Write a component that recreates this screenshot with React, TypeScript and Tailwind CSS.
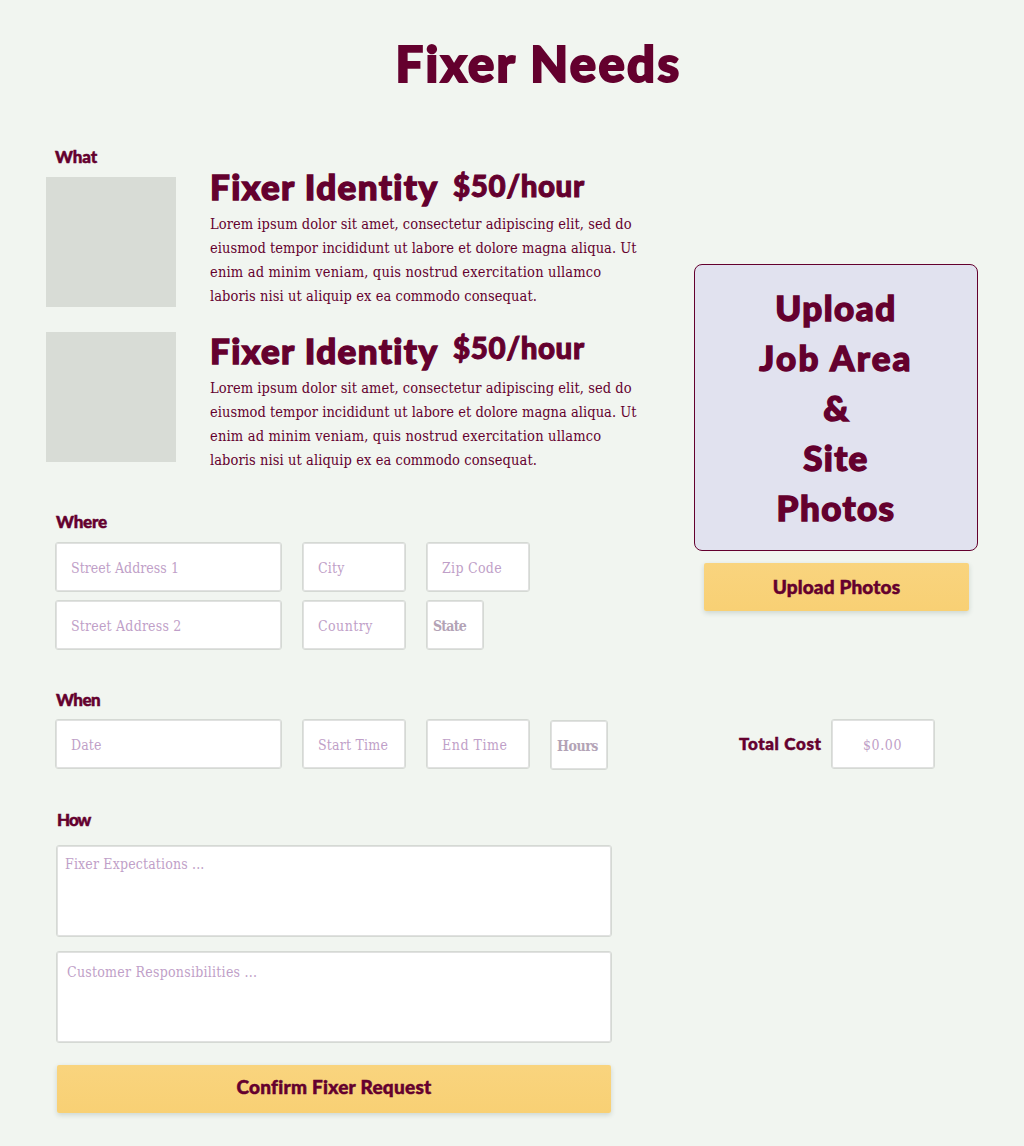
import type { ReactNode } from "react";

const LOREM = [
  { text: "Lorem ipsum dolor sit amet, consectetur adipiscing elit, sed do", track: "tracking-[0.055px]" },
  { text: "eiusmod tempor incididunt ut labore et dolore magna aliqua. Ut", track: "tracking-[0.04px]" },
  { text: "enim ad minim veniam, quis nostrud exercitation ullamco", track: "tracking-[0.185px]" },
  { text: "laboris nisi ut aliquip ex ea commodo consequat.", track: "tracking-[0.08px]" },
];

const UPLOAD = [
  { text: "Upload", track: "tracking-[1.5px]" },
  { text: "Job Area", track: "tracking-[2.2px]" },
  { text: "&", track: "tracking-normal" },
  { text: "Site", track: "tracking-[1.3px]" },
  { text: "Photos", track: "tracking-[1.4px]" },
];

function Label({ children, className }: { children: ReactNode; className: string }) {
  return (
    <h2
      className={
        "h-5 whitespace-nowrap font-['Lato',sans-serif] text-[17px] leading-5 font-black [-webkit-text-stroke:0.5px_#64002e] " +
        className
      }
    >
      {children}
    </h2>
  );
}

function Field({ children, className }: { children: ReactNode; className: string }) {
  return (
    <div
      className={
        "flex h-[50px] shrink-0 items-center rounded-[3px] border border-[#d5d9d4] bg-white pt-[3px] text-[14px] whitespace-nowrap text-[#bf9fc8] inset-ring inset-ring-[#e0e1e0] " +
        className
      }
    >
      {children}
    </div>
  );
}

function Area({ children, className }: { children: ReactNode; className: string }) {
  return (
    <div
      className={
        "ml-[10px] h-[92px] w-[556px] rounded-[3px] border border-[#d5d9d4] bg-white text-[14px] leading-6 text-[#bf9fc8] inset-ring inset-ring-[#e0e1e0] " +
        className
      }
    >
      {children}
    </div>
  );
}

function ActionButton({ children, className }: { children: ReactNode; className: string }) {
  return (
    <button
      className={
        "flex h-12 items-center justify-center rounded-xs bg-linear-to-b from-[#f9d47e] to-[#f8d074] font-['Lato',sans-serif] text-[19px] leading-6 font-black whitespace-nowrap shadow-[0_2px_5px_rgba(60,90,80,0.2)] [-webkit-text-stroke:0.5px_#64002e] " +
        className
      }
    >
      {children}
    </button>
  );
}

function Fixer({ className, priceClass }: { className: string; priceClass: string }) {
  return (
    <div className={className}>
      <div className="flex h-10 items-start font-['Lato',sans-serif] font-black whitespace-nowrap">
        <h3 className="w-[243px] text-[35px] leading-10 tracking-[1.4px] [-webkit-text-stroke:1.4px_#64002e]">
          Fixer Identity
        </h3>
        <span className={"text-[29.5px] leading-10 tracking-[0.6px] [-webkit-text-stroke:1px_#64002e] " + priceClass}>
          $50/hour
        </span>
      </div>
      <div className="mt-[6px] text-[14.5px] leading-6 whitespace-nowrap">
        {LOREM.map((line) => (
          <p key={line.text} className={line.track}>
            {line.text}
          </p>
        ))}
      </div>
    </div>
  );
}

export default function App() {
  return (
    <main className="flex h-[1146px] w-[1024px] flex-col overflow-hidden bg-[#f1f5f0] font-['DejaVu_Serif',serif] text-[#64002e] [font-stretch:75%]">
      <header className="flex h-[147px] shrink-0 justify-center pt-[33px] pl-[53px]">
        <h1 className="h-[60px] font-['Lato',sans-serif] text-[49px] leading-[60px] font-black tracking-[2.35px] whitespace-nowrap [-webkit-text-stroke:2px_#64002e]">
          Fixer Needs
        </h1>
      </header>

      <div className="flex">
        <div className="w-[648px] shrink-0 pl-[46px]">
          <Label className="ml-[9px] tracking-[-0.1px]">What</Label>
          <section className="flex h-[345px]">
            <div className="flex flex-col gap-[25px] pt-[10px]">
              <div className="size-[130px] bg-[#d8dcd6]" />
              <div className="size-[130px] bg-[#d8dcd6]" />
            </div>
            <div className="ml-[34px] -mt-px">
              <Fixer className="h-[164px]" priceClass="mt-0" />
              <Fixer className="h-[142px]" priceClass="-mt-[2px]" />
            </div>
          </section>

          <section>
            <Label className="ml-[10px] tracking-[-0.2px]">Where</Label>
            <div className="mt-[10px] ml-[9px] flex gap-5">
              <Field className="w-[227px] pl-[15px] tracking-[0.04px]">Street Address 1</Field>
              <Field className="w-[104px] pl-[15px] tracking-[0.2px]">City</Field>
              <Field className="w-[104px] pl-[15px] tracking-[0.3px]">Zip Code</Field>
            </div>
            <div className="mt-2 ml-[9px] flex gap-5">
              <Field className="w-[227px] pl-[15px] tracking-[0.2px]">Street Address 2</Field>
              <Field className="w-[104px] pl-[15px] tracking-[0.45px]">Country</Field>
              <Field className="w-[58px] pl-[6px] tracking-[-0.8px]">
                <span className="font-bold text-[#b3a3b6]">State</span>
              </Field>
            </div>
          </section>

          <section className="mt-10">
            <Label className="ml-[10px] tracking-[-0.5px]">When</Label>
            <div className="mt-[9px] ml-[9px] flex h-[51px] items-start gap-5">
              <Field className="w-[227px] pl-[15px] tracking-[0.1px]">Date</Field>
              <Field className="w-[104px] pl-[15px] tracking-[0.2px]">Start Time</Field>
              <Field className="w-[104px] pl-[15px] tracking-[0.55px]">End Time</Field>
              <Field className="mt-px w-[58px] pl-[6px] tracking-[-0.44px]">
                <span className="font-bold text-[#b3a3b6]">Hours</span>
              </Field>
            </div>
          </section>

          <section className="mt-10">
            <Label className="ml-[11px] tracking-[-1px]">How</Label>
            <Area className="mt-[15px] pt-[6px] pl-[8px] tracking-[0.16px]">Fixer Expectations ...</Area>
            <Area className="mt-[14px] pt-[8px] pl-[10px] tracking-[0.25px]">Customer Responsibilities ...</Area>
            <ActionButton className="mt-[22px] ml-[11px] w-[554px] pb-1 tracking-[0.27px]">Confirm Fixer Request</ActionButton>
          </section>
        </div>

        <aside className="ml-[46px] w-[284px] pt-[117px]">
          <div className="flex h-[287px] flex-col rounded-lg border border-[#64002e] bg-[#e1e2ef] pt-[17px] text-center font-['Lato',sans-serif] text-[35px] leading-[50px] font-black [-webkit-text-stroke:1.4px_#64002e]">
            {UPLOAD.map((line) => (
              <span key={line.text} className={line.track}>
                {line.text}
              </span>
            ))}
          </div>
          <ActionButton className="mt-3 ml-[10px] w-[265px] tracking-[0.15px]">Upload Photos</ActionButton>
          <div className="mt-[108px] ml-[45px] flex items-center">
            <Label className="w-[92px] tracking-[0.65px]">Total Cost</Label>
            <Field className="w-[104px] justify-center pt-0 pr-px tracking-[0.6px]">$0.00</Field>
          </div>
        </aside>
      </div>
    </main>
  );
}
